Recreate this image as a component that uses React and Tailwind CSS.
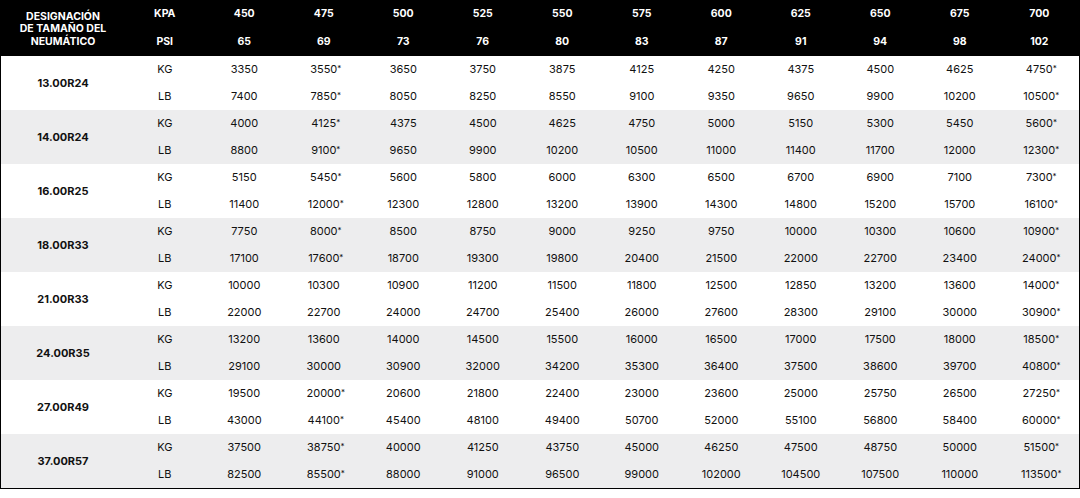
const pressures = [
  ['450', '65'], ['475', '69'], ['500', '73'], ['525', '76'], ['550', '80'], ['575', '83'],
  ['600', '87'], ['625', '91'], ['650', '94'], ['675', '98'], ['700', '102'],
];

const tires = [
  { size: '13.00R24',
    kg: ['3350', '3550*', '3650', '3750', '3875', '4125', '4250', '4375', '4500', '4625', '4750*'],
    lb: ['7400', '7850*', '8050', '8250', '8550', '9100', '9350', '9650', '9900', '10200', '10500*'] },
  { size: '14.00R24',
    kg: ['4000', '4125*', '4375', '4500', '4625', '4750', '5000', '5150', '5300', '5450', '5600*'],
    lb: ['8800', '9100*', '9650', '9900', '10200', '10500', '11000', '11400', '11700', '12000', '12300*'] },
  { size: '16.00R25',
    kg: ['5150', '5450*', '5600', '5800', '6000', '6300', '6500', '6700', '6900', '7100', '7300*'],
    lb: ['11400', '12000*', '12300', '12800', '13200', '13900', '14300', '14800', '15200', '15700', '16100*'] },
  { size: '18.00R33',
    kg: ['7750', '8000*', '8500', '8750', '9000', '9250', '9750', '10000', '10300', '10600', '10900*'],
    lb: ['17100', '17600*', '18700', '19300', '19800', '20400', '21500', '22000', '22700', '23400', '24000*'] },
  { size: '21.00R33',
    kg: ['10000', '10300', '10900', '11200', '11500', '11800', '12500', '12850', '13200', '13600', '14000*'],
    lb: ['22000', '22700', '24000', '24700', '25400', '26000', '27600', '28300', '29100', '30000', '30900*'] },
  { size: '24.00R35',
    kg: ['13200', '13600', '14000', '14500', '15500', '16000', '16500', '17000', '17500', '18000', '18500*'],
    lb: ['29100', '30000', '30900', '32000', '34200', '35300', '36400', '37500', '38600', '39700', '40800*'] },
  { size: '27.00R49',
    kg: ['19500', '20000*', '20600', '21800', '22400', '23000', '23600', '25000', '25750', '26500', '27250*'],
    lb: ['43000', '44100*', '45400', '48100', '49400', '50700', '52000', '55100', '56800', '58400', '60000*'] },
  { size: '37.00R57',
    kg: ['37500', '38750*', '40000', '41250', '43750', '45000', '46250', '47500', '48750', '50000', '51500*'],
    lb: ['82500', '85500*', '88000', '91000', '96500', '99000', '102000', '104500', '107500', '110000', '113500*'] },
];

const grid = 'grid grid-cols-[124px_repeat(12,minmax(0,1fr))]';

// trailing asterisk is printed small and raised
const Value = ({ v }) =>
  v.endsWith('*') ? (
    <span className="pl-[5px]">
      {v.slice(0, -1)}
      <span className="inline-block w-[5px] text-[8px] relative -top-[2px]">*</span>
    </span>
  ) : (
    v
  );

export default function App() {
  return (
    <div className="w-[1080px] h-[498px] bg-white text-[#111]" style={{ fontFamily: 'Inter, "Noto Sans", sans-serif' }}>
      <div className="border border-t-0 border-black">
        {/* header */}
        <div className={`${grid} grid-rows-[28px_28px] bg-black text-white font-bold text-[10.5px]`}>
          <div className="row-span-2 flex items-center justify-center text-center leading-[12.5px] pt-[3px]">
            DESIGNACIÓN<br />DE TAMAÑO DEL<br />NEUMÁTICO
          </div>
          <div className="flex items-center justify-center">KPA</div>
          {pressures.map(([kpa]) => (
            <div key={kpa} className="flex items-center justify-center">{kpa}</div>
          ))}
          <div className="flex items-center justify-center">PSI</div>
          {pressures.map(([kpa, psi]) => (
            <div key={kpa} className="flex items-center justify-center">{psi}</div>
          ))}
        </div>

        {/* body */}
        {tires.map((t, i) => (
          <div
            key={t.size}
            className={`${grid} grid-rows-[27px_27px] text-[11px] ${i % 2 ? 'bg-[#ededee]' : 'bg-white'}`}
          >
            <div className="row-span-2 flex items-center justify-center font-bold">{t.size}</div>
            <div className="flex items-center justify-center">KG</div>
            {t.kg.map((v, j) => (
              <div key={j} className="flex items-center justify-center"><Value v={v} /></div>
            ))}
            <div className="flex items-center justify-center">LB</div>
            {t.lb.map((v, j) => (
              <div key={j} className="flex items-center justify-center"><Value v={v} /></div>
            ))}
          </div>
        ))}
      </div>
    </div>
  );
}
